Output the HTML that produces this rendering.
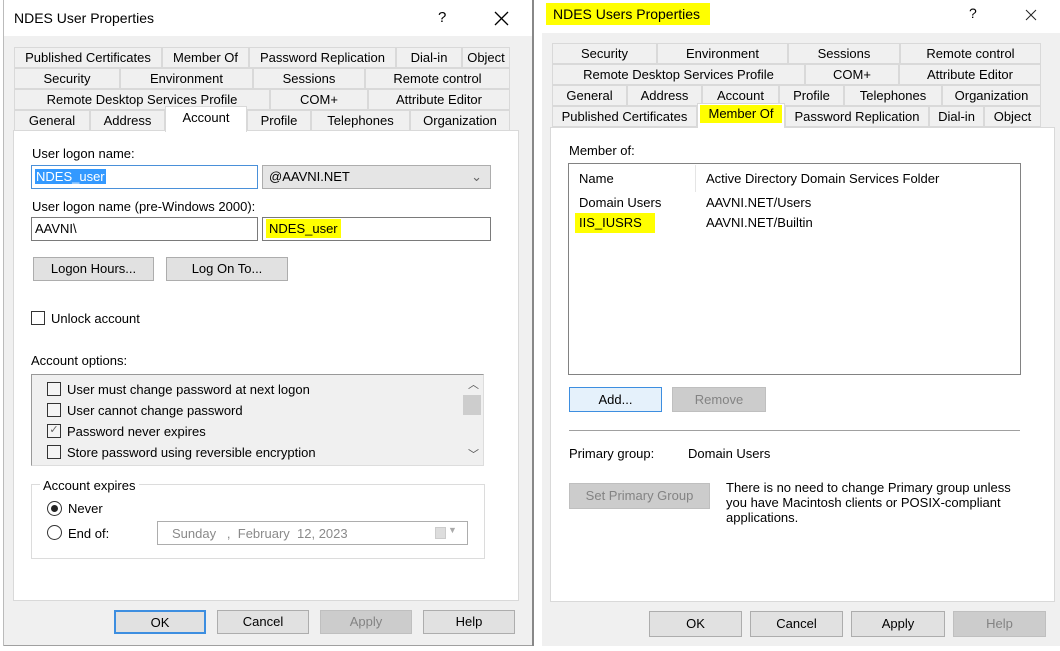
<!DOCTYPE html>
<html><head><meta charset="utf-8"><style>
*{box-sizing:border-box;margin:0;padding:0}
body{width:1060px;height:651px;background:#fff;position:relative;overflow:hidden;font-family:"Liberation Sans",sans-serif;font-size:13px;color:#000}
.a{position:absolute}
.t{position:absolute;white-space:nowrap}
.tab{position:absolute;height:21px;border:1px solid #d9d9d9;background:#f0f0f0;text-align:center;line-height:19px;font-size:13px;color:#000}
.sel{background:#fff;border-bottom:none}
.btn{position:absolute;background:#e1e1e1;border:1px solid #adadad;text-align:center;font-size:13px}
.dis{background:#ccc;border-color:#bfbfbf;color:#838383}
.inp{position:absolute;background:#fff;border:1px solid #7a7a7a;height:24px;line-height:22px;padding-left:3px}
.cb{position:absolute;width:14px;height:14px;border:1px solid #333;background:#fff}
.hl{background:#ffff00}
</style></head><body>
<!-- LEFT DIALOG -->
<div class="a" style="left:3px;top:36px;width:530px;height:610px;background:#f0f0f0;border-right:1px solid #a0a0a0;border-bottom:1px solid #a0a0a0"></div>
<div class="a" style="left:3px;top:0;width:1px;height:646px;background:#bbb"></div>
<div class="t" style="left:14px;top:10px;font-size:14px">NDES User Properties</div>
<div class="t" style="left:438px;top:9px;font-size:15px">?</div>
<svg class="a" style="left:494px;top:11px" width="15" height="15"><path d="M1 1L14 14M14 1L1 14" stroke="#000" stroke-width="1.3"/></svg>
<div class="a" style="left:13px;top:130px;width:506px;height:471px;background:#fff;border:1px solid #d9d9d9"></div>
<div class="tab" style="left:14px;top:47px;width:148px">Published Certificates</div>
<div class="tab" style="left:162px;top:47px;width:87px">Member Of</div>
<div class="tab" style="left:249px;top:47px;width:147px">Password Replication</div>
<div class="tab" style="left:396px;top:47px;width:66px">Dial-in</div>
<div class="tab" style="left:462px;top:47px;width:48px">Object</div>
<div class="tab" style="left:14px;top:68px;width:106px">Security</div>
<div class="tab" style="left:120px;top:68px;width:133px">Environment</div>
<div class="tab" style="left:253px;top:68px;width:112px">Sessions</div>
<div class="tab" style="left:365px;top:68px;width:145px">Remote control</div>
<div class="tab" style="left:14px;top:89px;width:256px">Remote Desktop Services Profile</div>
<div class="tab" style="left:270px;top:89px;width:98px">COM+</div>
<div class="tab" style="left:368px;top:89px;width:142px">Attribute Editor</div>
<div class="tab" style="left:14px;top:110px;width:76px">General</div>
<div class="tab" style="left:90px;top:110px;width:75px">Address</div>
<div class="tab sel" style="left:165px;top:106px;width:82px;height:26px;line-height:22px">Account</div>
<div class="tab" style="left:247px;top:110px;width:64px">Profile</div>
<div class="tab" style="left:311px;top:110px;width:99px">Telephones</div>
<div class="tab" style="left:410px;top:110px;width:100px">Organization</div>

<div class="t" style="left:32px;top:146px">User logon name:</div>
<div class="inp" style="left:31px;top:165px;width:227px;border-color:#4a90d9"><span style="background:#3399ff;color:#fff;padding:0 1px">NDES_user</span></div>
<div class="inp" style="left:262px;top:165px;width:229px;background:#e5e5e5;border-color:#adadad;padding-left:6px">@AAVNI.NET<span style="position:absolute;right:8px;top:0;color:#666">⌄</span></div>
<div class="t" style="left:32px;top:199px">User logon name (pre-Windows 2000):</div>
<div class="inp" style="left:31px;top:217px;width:227px">AAVNI\</div>
<div class="inp" style="left:262px;top:217px;width:229px"><span class="hl" style="padding:2px 3px">NDES_user</span></div>
<div class="btn" style="left:33px;top:257px;width:121px;height:24px;line-height:22px">Logon Hours...</div>
<div class="btn" style="left:166px;top:257px;width:122px;height:24px;line-height:22px">Log On To...</div>
<div class="cb" style="left:31px;top:311px"></div>
<div class="t" style="left:51px;top:311px">Unlock account</div>
<div class="t" style="left:31px;top:353px">Account options:</div>
<div class="a" style="left:31px;top:374px;width:453px;height:92px;background:#f0f0f0;border:1px solid #999;border-right-color:#ddd;border-bottom-color:#ddd"></div>
<div class="cb" style="left:47px;top:382px;background:#f4f4f4"></div><div class="t" style="left:67px;top:382px">User must change password at next logon</div>
<div class="cb" style="left:47px;top:403px;background:#f4f4f4"></div><div class="t" style="left:67px;top:403px">User cannot change password</div>
<div class="cb" style="left:47px;top:424px;background:#f4f4f4;font-size:11px;line-height:11px;color:#666;text-align:center">✓</div><div class="t" style="left:67px;top:424px">Password never expires</div>
<div class="cb" style="left:47px;top:445px;background:#f4f4f4"></div><div class="t" style="left:67px;top:445px">Store password using reversible encryption</div>
<div class="t" style="left:468px;top:376px;font-size:11px;color:#555">︿</div>
<div class="a" style="left:463px;top:395px;width:18px;height:20px;background:#cdcdcd"></div>
<div class="t" style="left:468px;top:446px;font-size:11px;color:#555">﹀</div>
<div class="a" style="left:31px;top:484px;width:454px;height:75px;border:1px solid #dcdcdc"></div>
<div class="t" style="left:40px;top:478px;background:#fff;padding:0 3px">Account expires</div>
<div class="a" style="left:47px;top:501px;width:15px;height:15px;border:1px solid #333;border-radius:50%;background:#fff"><div class="a" style="left:3px;top:3px;width:7px;height:7px;border-radius:50%;background:#222"></div></div>
<div class="t" style="left:68px;top:501px">Never</div>
<div class="a" style="left:47px;top:525px;width:15px;height:15px;border:1px solid #333;border-radius:50%;background:#fff"></div>
<div class="t" style="left:68px;top:526px">End of:</div>
<div class="a" style="left:157px;top:521px;width:311px;height:24px;border:1px solid #adadad"></div>
<div class="t" style="left:172px;top:526px;color:#8a8a8a">Sunday &nbsp; , &nbsp;February &nbsp;12, 2023</div>
<div class="a" style="left:435px;top:527px;width:11px;height:12px;background:#ddd;border:1px solid #ccc"></div>
<div class="t" style="left:448px;top:525px;color:#aaa;font-size:9px">▼</div>
<div class="btn" style="left:114px;top:610px;width:92px;height:24px;line-height:22px;border:2px solid #3d8ee0">OK</div>
<div class="btn" style="left:217px;top:610px;width:92px;height:24px;line-height:22px">Cancel</div>
<div class="btn dis" style="left:320px;top:610px;width:92px;height:24px;line-height:22px">Apply</div>
<div class="btn" style="left:423px;top:610px;width:92px;height:24px;line-height:22px">Help</div>

<!-- RIGHT DIALOG -->
<div class="a" style="left:542px;top:33px;width:518px;height:613px;background:#f0f0f0"></div>
<div class="t hl" style="left:546px;top:3px;width:164px;height:22px;font-size:14px;line-height:22px;padding-left:7px">NDES Users Properties</div>
<div class="t" style="left:969px;top:5px;font-size:14px">?</div>
<svg class="a" style="left:1025px;top:9px" width="12" height="12"><path d="M1 1L11 11M11 1L1 11" stroke="#222" stroke-width="1"/></svg>
<div class="a" style="left:550px;top:127px;width:505px;height:475px;background:#fff;border:1px solid #d9d9d9"></div>
<div class="tab" style="left:552px;top:43px;width:105px">Security</div>
<div class="tab" style="left:657px;top:43px;width:131px">Environment</div>
<div class="tab" style="left:788px;top:43px;width:112px">Sessions</div>
<div class="tab" style="left:900px;top:43px;width:141px">Remote control</div>
<div class="tab" style="left:552px;top:64px;width:253px">Remote Desktop Services Profile</div>
<div class="tab" style="left:805px;top:64px;width:94px">COM+</div>
<div class="tab" style="left:899px;top:64px;width:142px">Attribute Editor</div>
<div class="tab" style="left:552px;top:85px;width:75px">General</div>
<div class="tab" style="left:627px;top:85px;width:75px">Address</div>
<div class="tab" style="left:702px;top:85px;width:77px">Account</div>
<div class="tab" style="left:779px;top:85px;width:65px">Profile</div>
<div class="tab" style="left:844px;top:85px;width:98px">Telephones</div>
<div class="tab" style="left:942px;top:85px;width:99px">Organization</div>
<div class="tab" style="left:552px;top:106px;width:145px">Published Certificates</div>
<div class="tab sel" style="left:697px;top:103px;width:88px;height:25px;line-height:22px"><span class="hl" style="display:block;margin:1px 2px 0;height:18px;line-height:18px">Member Of</span></div>
<div class="tab" style="left:785px;top:106px;width:144px">Password Replication</div>
<div class="tab" style="left:929px;top:106px;width:55px">Dial-in</div>
<div class="tab" style="left:984px;top:106px;width:57px">Object</div>

<div class="t" style="left:569px;top:143px">Member of:</div>
<div class="a" style="left:568px;top:163px;width:453px;height:212px;border:1px solid #828282;background:#fff"></div>
<div class="a" style="left:695px;top:165px;width:1px;height:27px;background:#e5e5e5"></div>
<div class="t" style="left:579px;top:171px">Name</div>
<div class="t" style="left:706px;top:171px">Active Directory Domain Services Folder</div>
<div class="t" style="left:579px;top:195px">Domain Users</div>
<div class="t" style="left:706px;top:195px">AAVNI.NET/Users</div>
<div class="t hl" style="left:575px;top:213px;width:80px;height:20px;line-height:20px;padding-left:4px">IIS_IUSRS</div>
<div class="t" style="left:706px;top:215px">AAVNI.NET/Builtin</div>
<div class="btn" style="left:569px;top:387px;width:93px;height:25px;line-height:23px;border-color:#3d8ee0;background:#e5f1fb">Add...</div>
<div class="btn dis" style="left:672px;top:387px;width:94px;height:25px;line-height:23px">Remove</div>
<div class="a" style="left:569px;top:430px;width:451px;height:1px;background:#a0a0a0"></div>
<div class="t" style="left:569px;top:446px">Primary group:</div>
<div class="t" style="left:688px;top:446px">Domain Users</div>
<div class="btn dis" style="left:569px;top:483px;width:141px;height:26px;line-height:24px">Set Primary Group</div>
<div class="t" style="left:726px;top:480px;line-height:15px">There is no need to change Primary group unless<br>you have Macintosh clients or POSIX-compliant<br>applications.</div>
<div class="btn" style="left:649px;top:611px;width:93px;height:26px;line-height:24px">OK</div>
<div class="btn" style="left:750px;top:611px;width:93px;height:26px;line-height:24px">Cancel</div>
<div class="btn" style="left:851px;top:611px;width:94px;height:26px;line-height:24px">Apply</div>
<div class="btn dis" style="left:953px;top:611px;width:93px;height:26px;line-height:24px">Help</div>
<div class="a" style="left:532px;top:0;width:2px;height:646px;background:#888"></div>
</body></html>
